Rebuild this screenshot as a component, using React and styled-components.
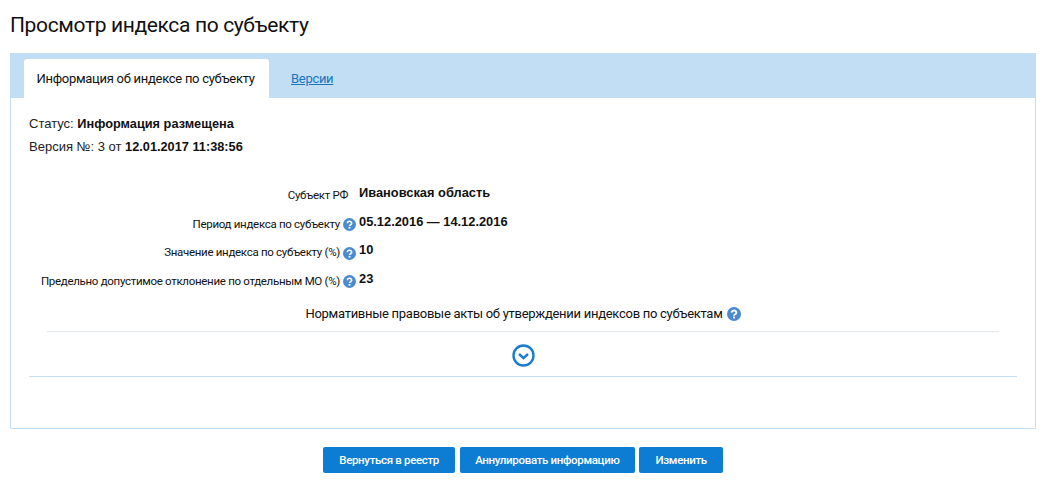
import React from "react";
import styled, { createGlobalStyle } from "styled-components";

const GlobalStyle = createGlobalStyle`
  html, body {
    margin: 0;
    background: #fff;
    color: #111;
    font-family: Roboto, "Liberation Sans", sans-serif;
  }
`;

const Page = styled.div`
  width: 1055px;
  height: 486px;
  padding: 12px 19px 0 10px;
  box-sizing: border-box;
  overflow: hidden;
`;

const Title = styled.h1`
  margin: 0 0 14px;
  height: 27px;
  font-size: 21px;
  line-height: 27px;
  font-weight: 400;
  letter-spacing: -0.36px;
  color: #111;
`;

const Panel = styled.section`
  height: 376px;
  box-sizing: border-box;
  border: 1px solid #c1def5;
  border-top: none;
  border-radius: 0 0 2px 2px;
`;

const TabBar = styled.div`
  height: 45px;
  margin: 0 -1px;
  padding: 6px 0 0 14px;
  box-sizing: border-box;
  background: #c1def5;
  display: flex;
  align-items: stretch;
`;

const Tab = styled.div`
  width: 245px;
  box-sizing: border-box;
  padding-right: 2px;
  display: flex;
  align-items: center;
  justify-content: center;
  background: #fff;
  border-radius: 3px 3px 0 0;
  font-size: 13px;
  letter-spacing: -0.28px;
  color: #111;
`;

const TabLink = styled.a`
  margin-left: 22px;
  align-self: center;
  font-size: 13px;
  letter-spacing: -0.3px;
  color: #1b75bc;
  text-decoration: underline;
`;

const Body = styled.div`
  padding: 14px 18px 0;
`;

const Meta = styled.div`
  font-family: "Liberation Sans", sans-serif;
  font-size: 13px;
  line-height: 23px;
  color: #222;

  b {
    font-size: 12.75px;
    color: #111;
  }
`;

const Fields = styled.div`
  margin-top: 26px;
  display: flex;
  flex-direction: column;
`;

const Row = styled.div`
  height: 28.6px;
  display: grid;
  grid-template-columns: 327px 1fr;
  column-gap: 3px;
  align-items: start;
`;

const Label = styled.div`
  display: flex;
  justify-content: flex-end;
  align-items: center;
  gap: 3px;
  font-size: 11.5px;
  letter-spacing: -0.3px;
  line-height: 18px;
  white-space: nowrap;
  color: #111;
  padding-top: 2px;

  svg {
    margin-top: 2px;
  }
`;

const Value = styled.div`
  font-family: "Liberation Sans", sans-serif;
  font-weight: 700;
  font-size: 12.85px;
  line-height: 18px;
  color: #111;
`;

const ActsHeading = styled.div`
  margin: 7px 18px 0;
  height: 26px;
  display: flex;
  justify-content: center;
  align-items: flex-start;
  gap: 4px;
  font-size: 13px;
  letter-spacing: -0.28px;
  line-height: 18px;
  border-bottom: 1px solid #e0e6ea;

  svg {
    margin-top: 2px;
  }
`;

const Expander = styled.div`
  height: 42px;
  padding-top: 2px;
  display: flex;
  justify-content: center;
  align-items: center;
  border-bottom: 1px solid #c1def5;
`;

const Actions = styled.div`
  margin-top: 18px;
  display: flex;
  justify-content: center;
  gap: 4.4px;
  width: 1026px;
`;

const Button = styled.button`
  height: 26px;
  width: ${(p) => p.$width}px;
  padding: 0;
  border: none;
  border-radius: 2px;
  background: #0d7dd4;
  color: #fff;
  font-family: Roboto, sans-serif;
  font-weight: 500;
  font-size: 11.5px;
  letter-spacing: -0.33px;
`;

const Spacer = styled.span`
  width: 5px;
  flex: none;
`;

const Hint = ({ size = 13 }) => (
  <svg width={size} height={size} viewBox="0 0 14 14">
    <circle cx="7" cy="7" r="7" fill="#4a8bd0" />
    <path d="M4.7 5.6a2.3 2 0 1 1 3.5 1.6c-.8.4-1.2.7-1.2 1.5" fill="none" stroke="#fff" strokeWidth="1.8" />
    <rect x="6" y="9.6" width="2" height="1.8" fill="#fff" />
  </svg>
);

const ExpandIcon = () => (
  <svg width="23" height="23" viewBox="0 0 23 23">
    <circle cx="11.5" cy="11.5" r="10" fill="none" stroke="#1b7dd0" strokeWidth="2.4" />
    <path d="M7 10l4.5 4.2L16 10" fill="none" stroke="#1b7dd0" strokeWidth="2.4" />
  </svg>
);

const fields = [
  { label: "Субъект РФ", value: "Ивановская область" },
  { label: "Период индекса по субъекту", value: "05.12.2016 — 14.12.2016", hint: true },
  { label: "Значение индекса по субъекту (%)", value: "10", hint: true },
  { label: "Предельно допустимое отклонение по отдельным МО (%)", value: "23", hint: true },
];

const App = () => (
  <Page>
    <GlobalStyle />
    <Title>Просмотр индекса по субъекту</Title>
    <Panel>
      <TabBar>
        <Tab>Информация об индексе по субъекту</Tab>
        <TabLink href="#">Версии</TabLink>
      </TabBar>
      <Body>
        <Meta>
          <div>Статус: <b>Информация размещена</b></div>
          <div>Версия №: 3 от <b>12.01.2017 11:38:56</b></div>
        </Meta>
        <Fields>
          {fields.map((f) => (
            <Row key={f.label}>
              <Label>
                {f.label}
                {f.hint ? <Hint /> : <Spacer />}
              </Label>
              <Value>{f.value}</Value>
            </Row>
          ))}
        </Fields>
        <ActsHeading>
          Нормативные правовые акты об утверждении индексов по субъектам
          <Hint size={14} />
        </ActsHeading>
        <Expander>
          <ExpandIcon />
        </Expander>
      </Body>
    </Panel>
    <Actions>
      <Button $width={132.6}>Вернуться в реестр</Button>
      <Button $width={175}>Аннулировать информацию</Button>
      <Button $width={84}>Изменить</Button>
    </Actions>
  </Page>
);

export default App;
